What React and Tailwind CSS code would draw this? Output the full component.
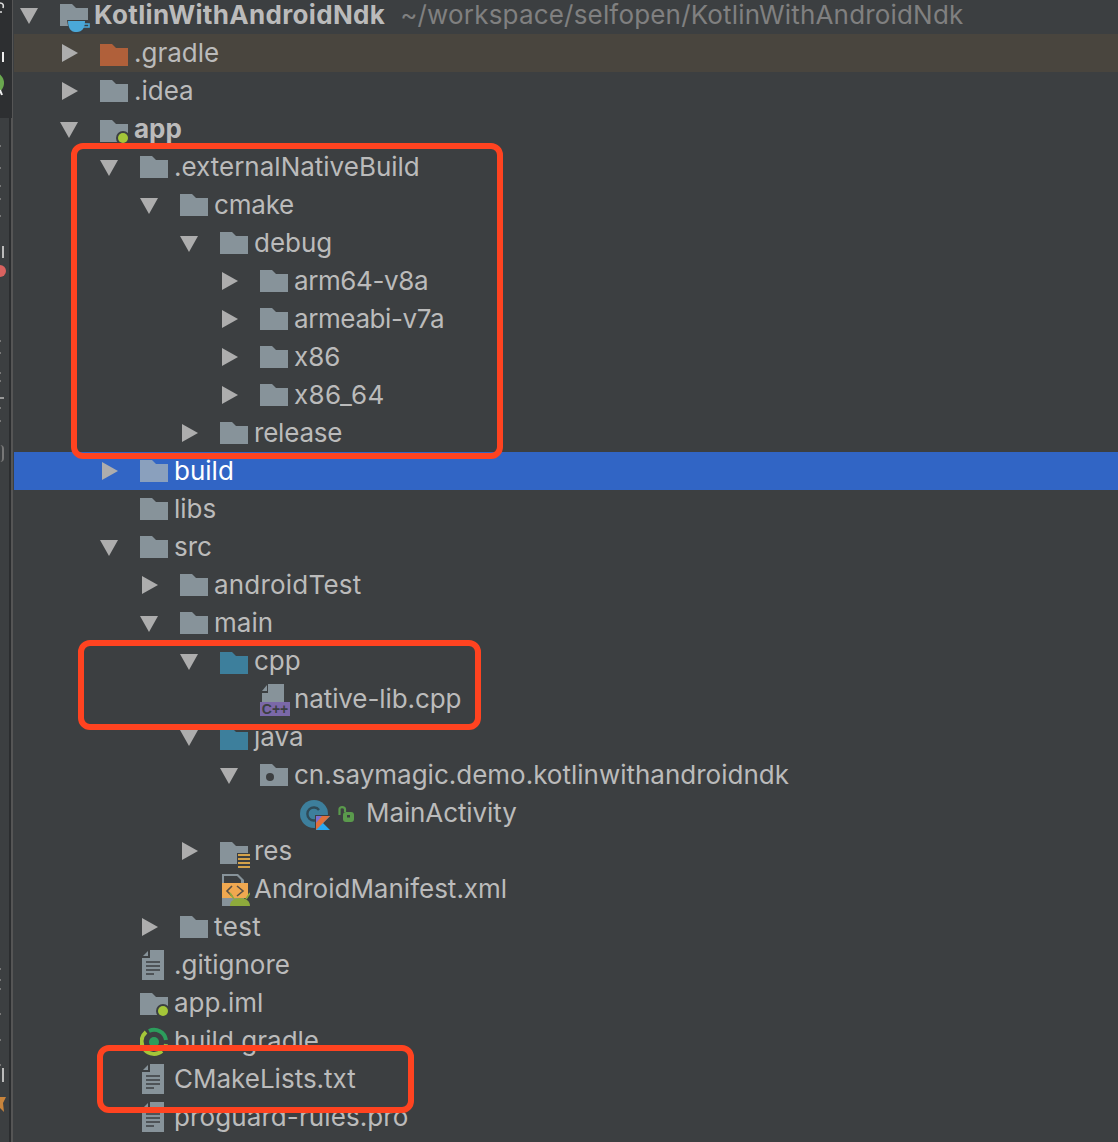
const Folder = ({ color = "#87939a", top = 4 }) => (
    <svg width="28" height="22" viewBox="0 0 28 22" className="block" style={{ marginTop: top }}>
        <path d="M0 0H12L16 4H28V22H0Z" fill={color} />
    </svg>
);

const Arrow = ({ open }) => (
    <svg width="18" height="18" viewBox="0 0 18 18" className="block">
        {open ? <path d="M0 2H18L9 18Z" fill="#adadad" /> : <path d="M2 0L18 9L2 18Z" fill="#adadad" />}
    </svg>
);

const ModuleFolder = ({ top = 6 }) => (
    <svg width="30" height="30" viewBox="0 0 30 30" className="block overflow-visible" style={{ marginTop: top }}>
        <path d="M0 0H12L16 4H28V22H0Z" fill="#87939a" />
        <circle cx="23" cy="18" r="7" fill="#3c3f41" />
        <circle cx="23" cy="18" r="5" fill="#a4c639" />
    </svg>
);

const ProjectFolder = () => (
    <svg width="30" height="30" viewBox="0 0 30 30" className="block overflow-visible mt-[4px]">
        <path d="M0 0H12L16 4H28V22H0Z" fill="#87939a" />
        <path d="M7 16H30V25H24C22 28 20 29 17 29H14C10 29 8 24 7 16Z" fill="#3c3f41" />
        <path d="M8 17H25C25 24 22 28 17 28H15C11 28 8 24 8 17Z" fill="#4aa8d8" />
        <path d="M24 20H29V23H23" fill="none" stroke="#4aa8d8" strokeWidth="1.6" />
    </svg>
);

const PackageFolder = () => (
    <svg width="28" height="22" viewBox="0 0 28 22" className="block mt-[4px]">
        <path d="M0 0H12L16 4H28V22H0Z" fill="#87939a" />
        <circle cx="10" cy="13" r="4" fill="#3c3f41" />
    </svg>
);

const ResFolder = () => (
    <svg width="30" height="28" viewBox="0 0 30 28" className="block overflow-visible mt-[6px]">
        <path d="M0 0H12L16 4H28V22H0Z" fill="#87939a" />
        <rect x="17" y="11" width="14" height="17" fill="#3c3f41" />
        <path d="M18 13H30M18 17H30M18 21H30M18 25H30" stroke="#d4a24a" strokeWidth="2" />
    </svg>
);

const TextFile = () => (
    <svg width="24" height="30" viewBox="0 0 24 30" className="block ml-[2px]">
        <path d="M8 0H22V30H0V8H8Z" fill="#87939a" />
        <path d="M1 6L6 1V6Z" fill="#87939a" />
        <path d="M4 12H18M4 16H18M4 20H18M4 24H12" stroke="#3c3f41" strokeWidth="1.6" />
    </svg>
);

const CppFile = () => (
    <svg width="30" height="32" viewBox="0 0 30 32" className="block">
        <path d="M8 0H24V18H2V9H8Z" fill="#87939a" />
        <path d="M2 7L7 1V7Z" fill="#87939a" />
        <rect x="0" y="18" width="30" height="14" fill="#7b68a8" />
        <text x="15" y="30" textAnchor="middle" fontSize="14" fontWeight="700" fontFamily="Liberation Sans, sans-serif" fill="#3c3f41">C++</text>
    </svg>
);

const ManifestFile = () => (
    <svg width="30" height="32" viewBox="0 0 30 32" className="block">
        <path d="M2 0H18L24 6V32H2Z" fill="#87939a" />
        <path d="M4 2H17L21 6V9H4Z" fill="#3c3f41" />
        <rect x="2" y="9" width="26" height="15" fill="#f0a850" />
        <path d="M12 12L7 17L12 22M17 12L23 17L17 22" fill="none" stroke="#5a5045" strokeWidth="1.6" />
        <path d="M10 32C10 27 14 24 20 24C26 24 30 27 30 32Z" fill="#8eaa3c" />
        <path d="M10 19L14 25M30 19L26 25" stroke="#8eaa3c" strokeWidth="1.6" />
    </svg>
);

const GradleFile = () => (
    <svg width="30" height="30" viewBox="0 0 30 30" className="block">
        <path d="M6 6A12 12 0 0 0 22 25" fill="none" stroke="#a4c639" strokeWidth="4" />
        <path d="M24 23A12 12 0 0 0 26 18" fill="none" stroke="#8bb04e" strokeWidth="4" />
        <path d="M9 5A12 12 0 0 1 26 14" fill="none" stroke="#2c9d5c" strokeWidth="4" />
        <circle cx="14" cy="16" r="5" fill="#2c9d5c" />
    </svg>
);

const KotlinClass = () => (
    <div className="flex items-start">
        <svg width="30" height="34" viewBox="0 0 30 34" className="block">
            <circle cx="14" cy="16" r="14" fill="#3d7f9c" />
            <path d="M19 12A6.5 6.5 0 1 0 19 20" fill="none" stroke="#2f4a57" strokeWidth="2.4" />
            <rect x="15" y="17" width="16" height="16" fill="#3c3f41" />
            <path d="M16 18H30L23 25L30 32H16Z" fill="#29a8f0" />
            <path d="M16 18H30L16 32Z" fill="#e0703c" />
            <path d="M16 18H22L16 25Z" fill="#7a6fd0" />
        </svg>
        <svg width="16" height="16" viewBox="0 0 16 16" className="block ml-[8px] mt-[8px]">
            <path d="M1.5 9V3C1.5 0.5 6.5 0.5 7 3V6" fill="none" stroke="#5a9a4c" strokeWidth="2.2" />
            <rect x="5" y="6" width="11" height="10" rx="3" fill="#5a9a4c" />
            <rect x="9" y="9" width="3" height="2.5" fill="#3c3f41" />
        </svg>
    </div>
);

const teal = "#3d7f9c";

const rows = [
    { d: 0, open: true, icon: <ProjectFolder />, name: "KotlinWithAndroidNdk", bold: true, nameClass: "tracking-[0.33px]", path: "~/workspace/selfopen/KotlinWithAndroidNdk" },
    { d: 1, open: false, icon: <Folder color="#b0603a" top={6} />, name: ".gradle", tint: true },
    { d: 1, open: false, icon: <Folder />, name: ".idea" },
    { d: 1, open: true, icon: <ModuleFolder />, name: "app", bold: true },
    { d: 2, open: true, icon: <Folder />, name: ".externalNativeBuild" },
    { d: 3, open: true, icon: <Folder />, name: "cmake", nameClass: "tracking-[-0.2px]" },
    { d: 4, open: true, icon: <Folder />, name: "debug" },
    { d: 5, open: false, icon: <Folder />, name: "arm64-v8a", nameClass: "tracking-[-0.4px]" },
    { d: 5, open: false, icon: <Folder />, name: "armeabi-v7a", nameClass: "tracking-[-0.4px]" },
    { d: 5, open: false, icon: <Folder />, name: "x86" },
    { d: 5, open: false, icon: <Folder />, name: "x86_64", nameClass: "tracking-[0.3px]" },
    { d: 4, open: false, icon: <Folder />, name: "release", nameClass: "tracking-[-0.2px]" },
    { d: 2, open: false, icon: <Folder color="#8aa0bd" />, name: "build", selected: true },
    { d: 2, icon: <Folder />, name: "libs" },
    { d: 2, open: true, icon: <Folder />, name: "src" },
    { d: 3, open: false, icon: <Folder />, name: "androidTest", nameClass: "tracking-[0.2px]" },
    { d: 3, open: true, icon: <Folder />, name: "main" },
    { d: 4, open: true, icon: <Folder color={teal} top={6} />, name: "cpp" },
    { d: 5, icon: <CppFile />, name: "native-lib.cpp", nameClass: "tracking-[-0.1px]" },
    { d: 4, open: true, icon: <Folder color={teal} top={6} />, name: "java" },
    { d: 5, open: true, icon: <PackageFolder />, name: "cn.saymagic.demo.kotlinwithandroidndk" },
    { d: 6, icon: <KotlinClass />, name: "MainActivity", textLeft: 66, nameClass: "tracking-[-0.1px]" },
    { d: 4, open: false, icon: <ResFolder />, name: "res" },
    { d: 4, icon: <ManifestFile />, name: "AndroidManifest.xml" },
    { d: 3, open: false, icon: <Folder />, name: "test", nameClass: "tracking-[0.4px]" },
    { d: 2, icon: <TextFile />, name: ".gitignore" },
    { d: 2, icon: <ModuleFolder top={5} />, name: "app.iml" },
    { d: 2, icon: <GradleFile />, name: "build.gradle" },
    { d: 2, icon: <TextFile />, name: "CMakeLists.txt" },
    { d: 2, icon: <TextFile />, name: "proguard-rules.pro", nameClass: "tracking-[0.1px]" },
];

const Row = ({ row }) => {
    const bg = row.selected ? "bg-[#3165c5]" : row.tint ? "bg-[#49453e]" : "";
    const color = row.selected ? "text-white" : row.bold ? "font-bold text-[#bbbbbb]" : "text-[#bbbbbb]";
    return (
        <div className={`flex items-center h-[38px] shrink-0 whitespace-nowrap ${bg}`} style={{ paddingLeft: 6 + row.d * 40 }}>
            <div className="w-[40px] shrink-0 flex items-center">
                {row.open !== undefined && <Arrow open={row.open} />}
            </div>
            <div className="shrink-0 h-[30px] flex items-start" style={{ width: row.textLeft || 34 }}>
                {row.icon}
            </div>
            <span className={`${color} ${row.nameClass || ""}`}>{row.name}</span>
            {row.path && <span className="ml-[15px] text-[#808080] tracking-[0.18px]">{row.path}</span>}
        </div>
    );
};

// marks on the cropped gutter strip, top to bottom: gap above, height, width, colour
const marks = [
    { gap: 145, h: 2, w: 1, c: "#777777" },
    { gap: 20, h: 2, w: 1, c: "#777777" },
    { gap: 16, h: 2, w: 1, c: "#777777" },
    { gap: 11, h: 2, w: 1, c: "#777777" },
    { gap: 15, h: 2, w: 1, c: "#777777" },
    { gap: 29, h: 12, w: 2, c: "#bbbbbb", ml: 2 },
    { gap: 7, h: 12, w: 6, c: "#d9625f", round: true },
    { gap: 63, h: 2, w: 1, c: "#777777" },
    { gap: 10, h: 2, w: 1, c: "#777777" },
    { gap: 18, h: 2, w: 1, c: "#777777" },
    { gap: 6, h: 2, w: 1, c: "#777777" },
    { gap: 15, h: 2, w: 4, c: "#999999" },
    { gap: 8, h: 2, w: 1, c: "#777777" },
    { gap: 11, h: 2, w: 1, c: "#777777" },
    { gap: 23, h: 17, w: 4, c: "transparent", arc: true },
    { gap: 506, h: 2, w: 1, c: "#777777" },
    { gap: 9, h: 2, w: 1, c: "#777777" },
    { gap: 7, h: 2, w: 1, c: "#777777" },
    { gap: 23, h: 2, w: 1, c: "#777777" },
    { gap: 24, h: 2, w: 1, c: "#777777" },
    { gap: 23, h: 2, w: 1, c: "#777777" },
    { gap: 2, h: 14, w: 2, c: "#bbbbbb", ml: 2 },
];

const Gutter = () => (
    <div className="relative w-[14px] shrink-0 flex bg-[#3c3f41]">
        <div className="w-[9px] flex flex-col overflow-hidden">
            {marks.map((m, i) => (
                <div
                    key={i}
                    className={`shrink-0 ${m.round ? "rounded-r-full" : ""} ${m.arc ? "rounded-r-full border-r-2 border-[#777777]" : ""}`}
                    style={{ marginTop: m.gap, height: m.h, width: m.w, marginLeft: m.ml || 0, background: m.c }}
                />
            ))}
        </div>
        <div className="w-[2px] bg-[#2b2d2f]" />
        <div className="w-[2px] bg-[#555555]" />
        {/* toolbar glyphs in the dark corner */}
        <svg width="12" height="118" viewBox="0 0 12 118" className="absolute left-0 top-0">
            <rect x="0" y="0" width="12" height="118" fill="#2d2f31" />
            <path d="M0 3C3 3 4 5 3 8M0 12H2" fill="none" stroke="#dddddd" strokeWidth="1.6" />
            <rect x="2" y="52" width="2" height="10" fill="#eeeeee" />
            <circle cx="-7" cy="83" r="11" fill="#6aa84f" />
            <path d="M0 90L2 95" stroke="#eeeeee" strokeWidth="2" />
        </svg>
        <svg width="8" height="16" viewBox="0 0 8 16" className="absolute left-0 top-[1097px]">
            <path d="M0 0H6L3 6L4 15L0 11Z" fill="#c8843c" />
        </svg>
    </div>
);

const Callout = ({ className }) => (
    <div className={`absolute border-[6px] border-[#ff4320] rounded-[12px] pointer-events-none ${className}`} />
);

export default function App() {
    return (
        <div className="relative flex w-[1118px] h-[1142px] overflow-hidden bg-[#3c3f41] text-[26px] leading-[38px] font-['Inter','Noto_Sans',sans-serif]">
            <Gutter />
            <div className="flex-1 flex flex-col -mt-[4px]">
                {rows.map((row) => <Row key={row.name} row={row} />)}
            </div>
            <Callout className="left-[71px] top-[143px] w-[432px] h-[316px]" />
            <Callout className="left-[78px] top-[640px] w-[403px] h-[90px]" />
            <Callout className="left-[97px] top-[1045px] w-[317px] h-[68px]" />
        </div>
    );
}
